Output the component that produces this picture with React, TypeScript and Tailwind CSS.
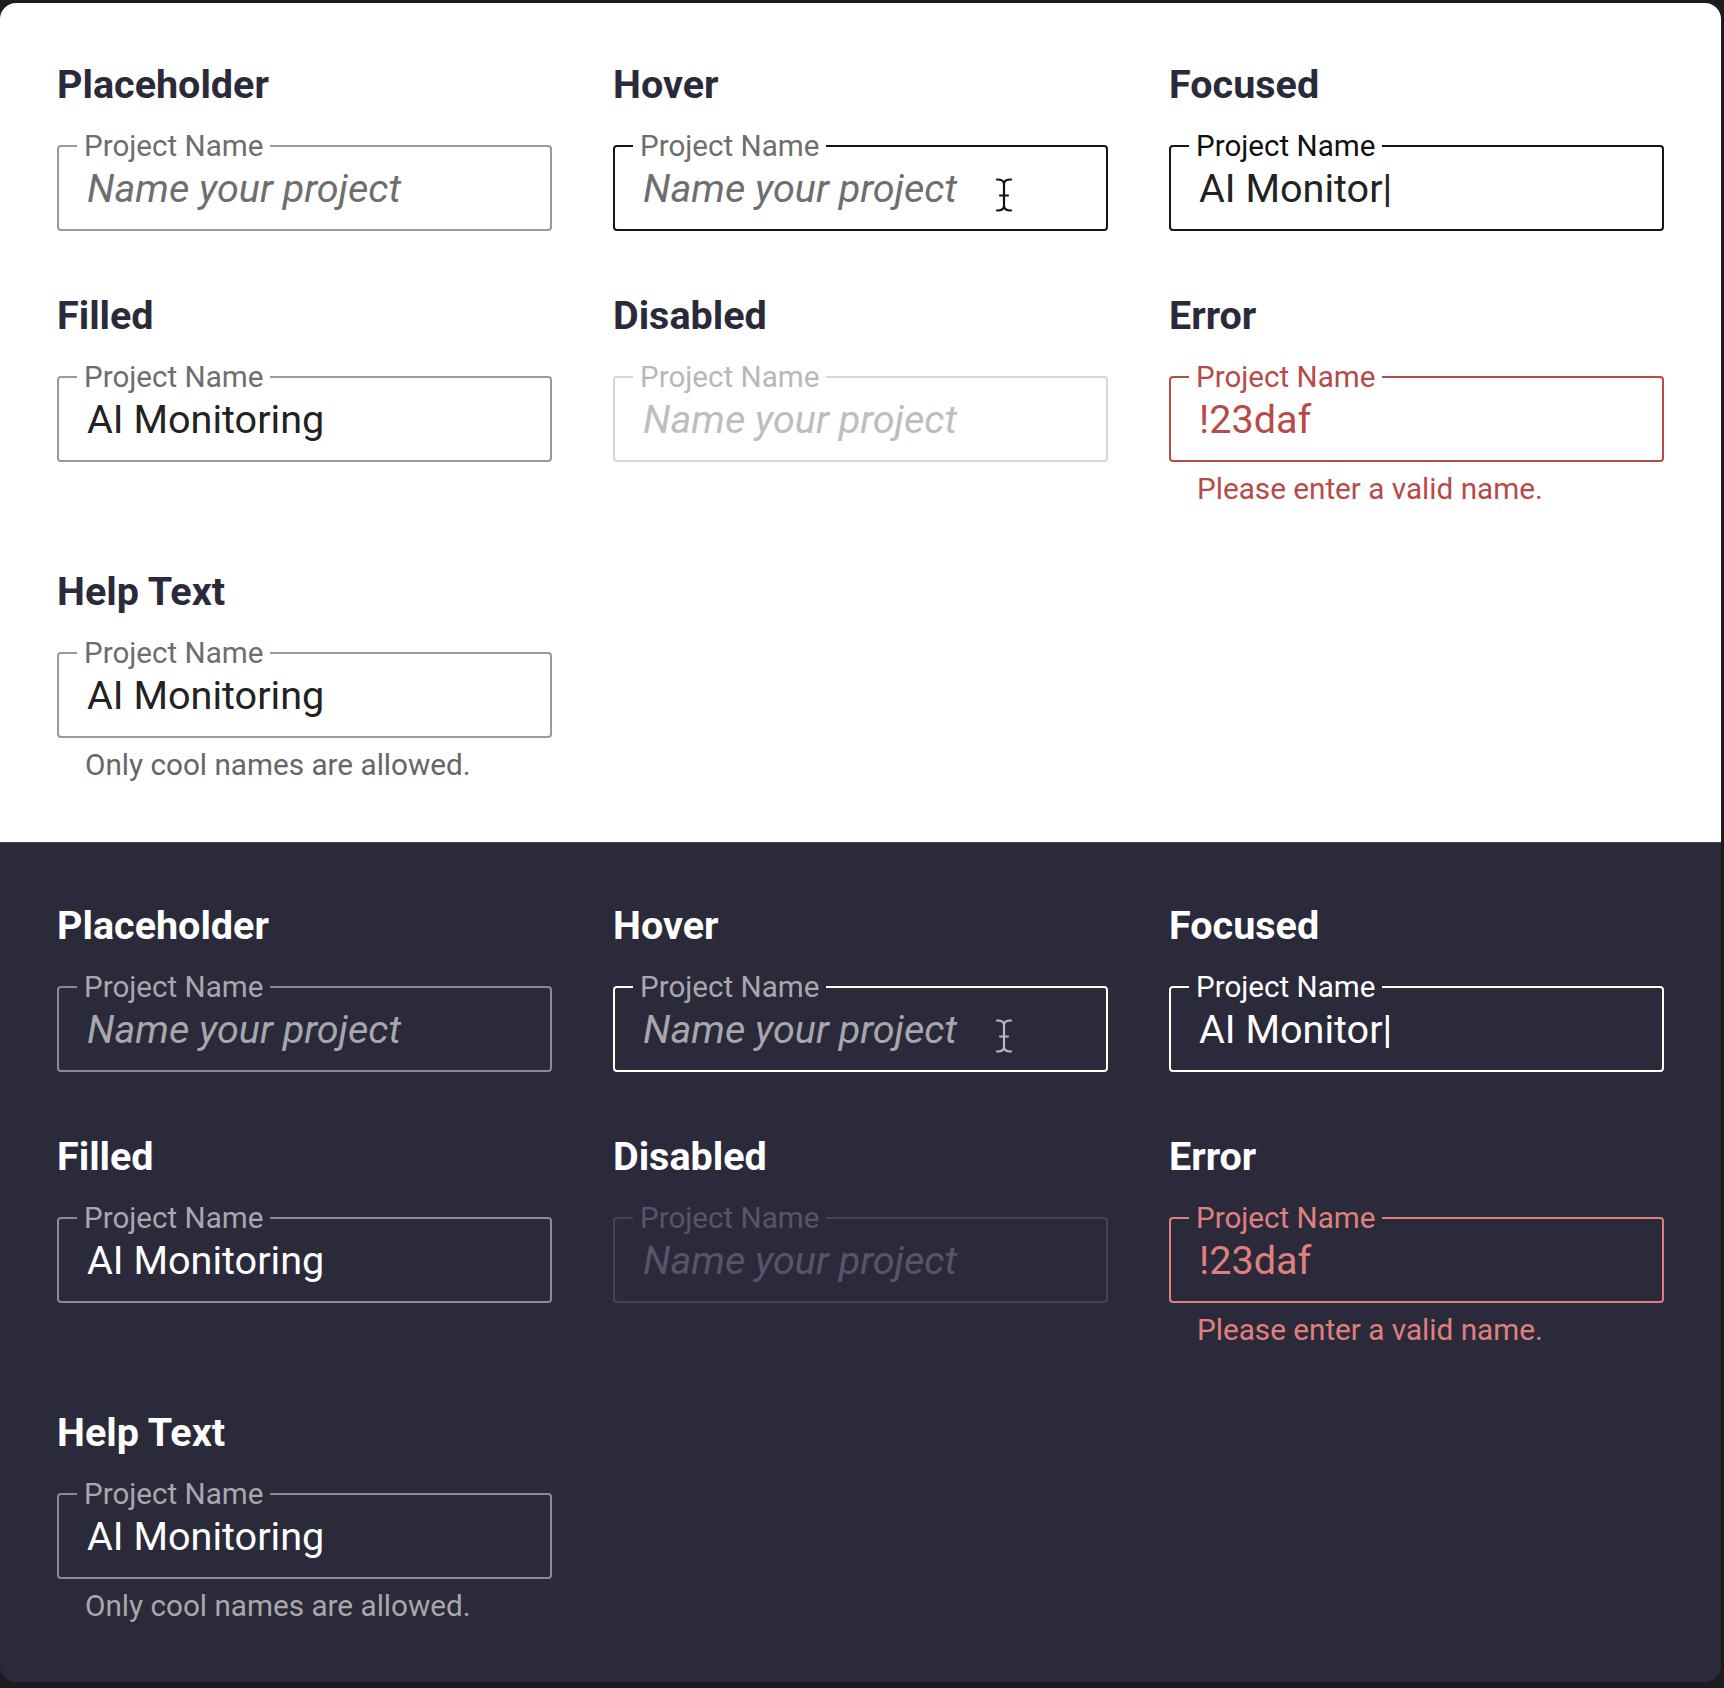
import React from "react";

type FieldConf = {
  title: string;
  border: string;
  labelColor: string;
  value: string;
  valueColor: string;
  italic?: boolean;
  helper?: string;
  helperColor?: string;
  cursor?: string;
};

const lightFields: FieldConf[] = [
  { title: "Placeholder", border: "border-[#999999]", labelColor: "text-[#6e6e6e]", value: "Name your project", valueColor: "text-[#6e6e6e]", italic: true },
  { title: "Hover", border: "border-[#151515]", labelColor: "text-[#6e6e6e]", value: "Name your project", valueColor: "text-[#6e6e6e]", italic: true, cursor: "#111111" },
  { title: "Focused", border: "border-[#151515]", labelColor: "text-[#111111]", value: "AI Monitor|", valueColor: "text-[#222222]" },
  { title: "Filled", border: "border-[#999999]", labelColor: "text-[#6e6e6e]", value: "AI Monitoring", valueColor: "text-[#222222]" },
  { title: "Disabled", border: "border-[#d6d6d6]", labelColor: "text-[#b8b8b8]", value: "Name your project", valueColor: "text-[#bdbdbd]", italic: true },
  { title: "Error", border: "border-[#b84a47]", labelColor: "text-[#b84a47]", value: "!23daf", valueColor: "text-[#b84a47]", helper: "Please enter a valid name.", helperColor: "text-[#b84a47]" },
  { title: "Help Text", border: "border-[#999999]", labelColor: "text-[#6e6e6e]", value: "AI Monitoring", valueColor: "text-[#222222]", helper: "Only cool names are allowed.", helperColor: "text-[#666666]" },
];

const darkFields: FieldConf[] = [
  { title: "Placeholder", border: "border-[#8b8a94]", labelColor: "text-[#a8a7ae]", value: "Name your project", valueColor: "text-[#a8a7ae]", italic: true },
  { title: "Hover", border: "border-[#ffffff]", labelColor: "text-[#a8a7ae]", value: "Name your project", valueColor: "text-[#a8a7ae]", italic: true, cursor: "#b8b7bd" },
  { title: "Focused", border: "border-[#ffffff]", labelColor: "text-[#ffffff]", value: "AI Monitor|", valueColor: "text-[#ffffff]" },
  { title: "Filled", border: "border-[#8b8a94]", labelColor: "text-[#a8a7ae]", value: "AI Monitoring", valueColor: "text-[#ffffff]" },
  { title: "Disabled", border: "border-[#44435a]", labelColor: "text-[#56556b]", value: "Name your project", valueColor: "text-[#56556b]", italic: true },
  { title: "Error", border: "border-[#e0807d]", labelColor: "text-[#e0807d]", value: "!23daf", valueColor: "text-[#e0807d]", helper: "Please enter a valid name.", helperColor: "text-[#e0807d]" },
  { title: "Help Text", border: "border-[#8b8a94]", labelColor: "text-[#a8a7ae]", value: "AI Monitoring", valueColor: "text-[#ffffff]", helper: "Only cool names are allowed.", helperColor: "text-[#a8a7ae]" },
];

function IBeam({ color }: { color: string }) {
  return (
    <svg
      className="absolute left-[380px] top-[31px]"
      width="18"
      height="34"
      viewBox="0 0 18 34"
      fill="none"
      stroke={color}
      strokeWidth="2.2"
      strokeLinecap="round"
    >
      <path d="M2 1.5 C6.5 1.5 9 2.5 9 6" />
      <path d="M16 1.5 C11.5 1.5 9 2.5 9 6" />
      <path d="M9 6 V28" />
      <path d="M9 28 C9 31.5 6.5 32.5 2 32.5" />
      <path d="M9 28 C9 31.5 11.5 32.5 16 32.5" />
      <path d="M5 17.5 H13" />
    </svg>
  );
}

function Field({ f, dark }: { f: FieldConf; dark: boolean }) {
  return (
    <div className="flex flex-col">
      <div className={`text-[39.5px] leading-[48px] font-bold ${dark ? "text-white" : "text-[#2b2a3a]"}`}>{f.title}</div>
      <div className={`relative mt-[36px] h-[86px] rounded-[4px] border-2 ${f.border} flex items-center pl-[28px] pt-[2px]`}>
        <span
          className={`absolute left-[18px] top-[-19px] px-[7px] text-[29.6px] leading-[36px] ${dark ? "bg-[#2b2a3a]" : "bg-white"} ${f.labelColor}`}
        >
          Project Name
        </span>
        <span className={`text-[39.6px] leading-[46px] whitespace-nowrap ${f.italic ? "italic" : ""} ${f.valueColor}`}>{f.value}</span>
        {f.cursor ? <IBeam color={f.cursor} /> : null}
      </div>
      {f.helper ? (
        <div className={`mt-[9px] pl-[28px] text-[29.7px] leading-[36px] ${f.helperColor}`}>{f.helper}</div>
      ) : null}
    </div>
  );
}

function Section({ fields, dark }: { fields: FieldConf[]; dark: boolean }) {
  return (
    <div className={`px-[57px] ${dark ? "pt-[59px] pb-[58px] bg-[#2b2a3a] border-t border-[#46455a]" : "pt-[58px] pb-[59px] bg-white"}`}>
      <div className="grid grid-cols-[495px_495px_495px] gap-x-[61px] gap-y-[61px] items-start">
        {fields.map((f) => (
          <Field key={f.title} f={f} dark={dark} />
        ))}
      </div>
    </div>
  );
}

export default function App() {
  return (
    <div className="w-[1724px] h-[1688px] bg-[#1c1c20] pt-[3px]" style={{ fontFamily: "Roboto, 'Noto Sans', sans-serif" }}>
      <div className="w-[1721px] rounded-[16px] overflow-hidden">
        <Section fields={lightFields} dark={false} />
        <Section fields={darkFields} dark={true} />
      </div>
    </div>
  );
}
